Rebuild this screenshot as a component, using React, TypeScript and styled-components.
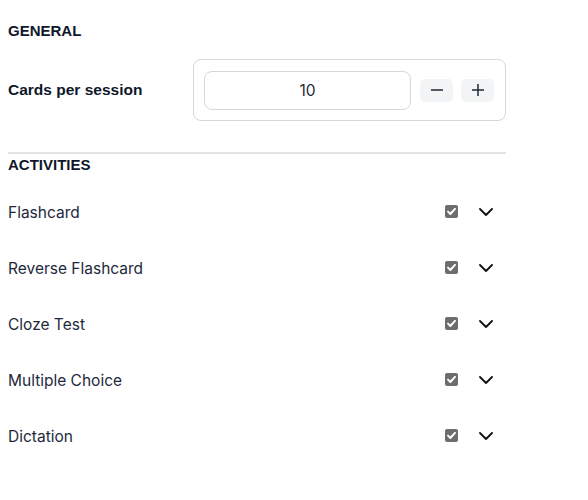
import React from "react";
import styled, { createGlobalStyle } from "styled-components";

const activities = [
    "Flashcard",
    "Reverse Flashcard",
    "Cloze Test",
    "Multiple Choice",
    "Dictation",
];

const App: React.FC = () => {
    return (
        <>
            <GlobalStyle />
            <Settings>
                <Heading>GENERAL</Heading>
                <FieldRow>
                    <FieldLabel>Cards per session</FieldLabel>
                    <Stepper>
                        <NumberInput type="text" defaultValue="10" />
                        <StepButton aria-label="decrease">
                            <svg width="14" height="14" viewBox="0 0 14 14">
                                <path d="M1 7h12" stroke="#1f2937" strokeWidth="1.5" />
                            </svg>
                        </StepButton>
                        <StepButton aria-label="increase">
                            <svg width="14" height="14" viewBox="0 0 14 14">
                                <path d="M1 7h12M7 1v12" stroke="#1f2937" strokeWidth="1.5" />
                            </svg>
                        </StepButton>
                    </Stepper>
                </FieldRow>
                <Divider />
                <Heading $tight>ACTIVITIES</Heading>
                <ActivityList>
                    {activities.map((name) => (
                        <ActivityRow key={name}>
                            <ActivityName>{name}</ActivityName>
                            <Controls>
                                <CheckBox role="checkbox" aria-checked="true">
                                    <svg width="13" height="13" viewBox="0 0 13 13">
                                        <path
                                            d="M3 6.6l2.4 2.4L10 3.8"
                                            fill="none"
                                            stroke="#ffffff"
                                            strokeWidth="1.9"
                                            strokeLinecap="round"
                                            strokeLinejoin="round"
                                        />
                                    </svg>
                                </CheckBox>
                                <Toggle aria-label="expand">
                                    <svg width="14" height="8" viewBox="0 0 14 8">
                                        <path
                                            d="M1 1l6 6 6-6"
                                            fill="none"
                                            stroke="#111111"
                                            strokeWidth="1.8"
                                            strokeLinecap="round"
                                            strokeLinejoin="round"
                                        />
                                    </svg>
                                </Toggle>
                            </Controls>
                        </ActivityRow>
                    ))}
                </ActivityList>
            </Settings>
        </>
    );
};

export default App;

// Styled Components
const GlobalStyle = createGlobalStyle`
    body {
        margin: 8px;
        background: #ffffff;
        font-family: "Liberation Sans", Arial, sans-serif;
        color: #111827;
    }
`;

const Settings = styled.div`
    width: 498px;
    display: flex;
    flex-direction: column;
`;

const Heading = styled.h3<{ $tight?: boolean }>`
    margin: 0;
    padding-top: ${({ $tight }) => ($tight ? "3px" : "15px")};
    font-size: 15px;
    font-weight: 700;
    line-height: 16px;
    color: #0f172a;
`;

const FieldRow = styled.div`
    display: grid;
    grid-template-columns: 185px 313px;
    align-items: center;
    margin-top: 20px;
`;

const FieldLabel = styled.span`
    font-size: 15.5px;
    font-weight: 700;
    color: #0f172a;
`;

const Stepper = styled.div`
    box-sizing: border-box;
    display: flex;
    align-items: center;
    height: 62px;
    padding: 0 11px 0 10px;
    border: 1px solid #d4d7dc;
    border-radius: 8px;
`;

const NumberInput = styled.input`
    flex: 1;
    min-width: 0;
    height: 39px;
    box-sizing: border-box;
    margin: 0 9px 0 0;
    border: 1px solid #d4d7dc;
    border-radius: 8px;
    text-align: center;
    font-family: "Inter", sans-serif;
    font-size: 15.5px;
    color: #1f2937;
    outline: none;
`;

const StepButton = styled.button`
    flex: none;
    width: 33px;
    height: 23px;
    display: flex;
    align-items: center;
    justify-content: center;
    padding: 0;
    border: none;
    border-radius: 5px;
    background: #f3f4f6;
    cursor: pointer;

    & + & {
        margin-left: 8px;
    }
`;

const Divider = styled.hr`
    margin: 31px 0 0;
    border: none;
    border-top: 2px solid #e2e4e8;
`;

const ActivityList = styled.div`
    display: flex;
    flex-direction: column;
    margin-top: 11px;
`;

const ActivityRow = styled.div`
    display: flex;
    align-items: center;
    justify-content: space-between;
    height: 56px;
`;

const ActivityName = styled.span`
    font-family: "Inter", sans-serif;
    font-size: 15.5px;
    color: #1e293b;
`;

const Controls = styled.div`
    display: flex;
    align-items: center;
    gap: 21px;
    padding-right: 13px;
`;

const CheckBox = styled.span`
    width: 13px;
    height: 13px;
    display: flex;
    margin-top: -1px;
    border-radius: 2px;
    background: #6d6d6d;
`;

const Toggle = styled.button`
    display: flex;
    padding: 0;
    border: none;
    background: none;
    cursor: pointer;
`;
